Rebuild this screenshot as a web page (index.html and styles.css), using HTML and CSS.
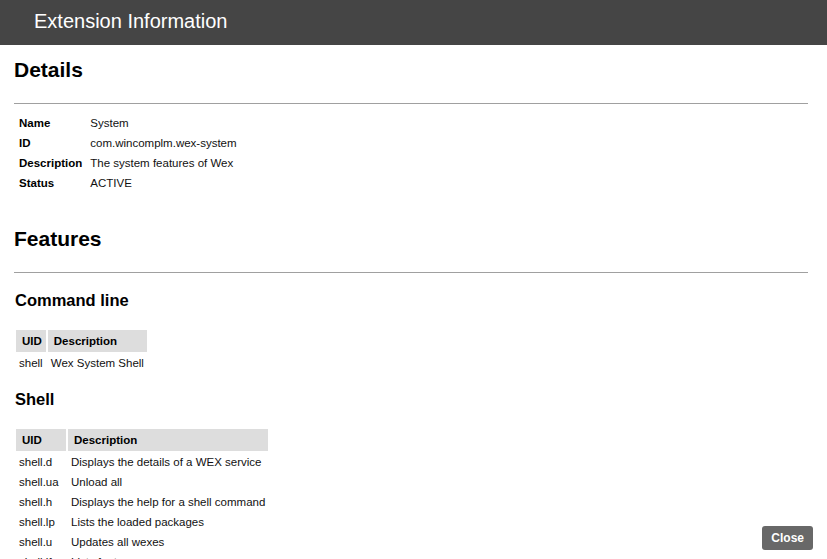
FILE: index.html
```html
<!DOCTYPE html>
<html>
<head>
<meta charset="utf-8">
<title>Extension Information</title>
<link rel="stylesheet" href="styles.css">
</head>
<body>
<header class="topbar">Extension Information</header>
<main class="content">
  <h2 class="section-title">Details</h2>
  <hr class="rule">
  <table class="details">
    <tr><td class="label">Name</td><td>System</td></tr>
    <tr><td class="label">ID</td><td>com.wincomplm.wex-system</td></tr>
    <tr><td class="label">Description</td><td>The system features of Wex</td></tr>
    <tr><td class="label">Status</td><td>ACTIVE</td></tr>
  </table>

  <h2 class="section-title features-title">Features</h2>
  <hr class="rule">
  <h3 class="group-title first-group">Command line</h3>
  <table class="grid">
    <tr><th>UID</th><th>Description</th></tr>
    <tr><td>shell</td><td>Wex System Shell</td></tr>
  </table>

  <h3 class="group-title">Shell</h3>
  <table class="grid">
    <tr><th class="uid-wide">UID</th><th>Description</th></tr>
    <tr><td>shell.d</td><td>Displays the details of a WEX service</td></tr>
    <tr><td>shell.ua</td><td>Unload all</td></tr>
    <tr><td>shell.h</td><td>Displays the help for a shell command</td></tr>
    <tr><td>shell.lp</td><td>Lists the loaded packages</td></tr>
    <tr><td>shell.u</td><td>Updates all wexes</td></tr>
    <tr><td>shell.lf</td><td>Lists features</td></tr>
  </table>
</main>
<button class="close-btn">Close</button>
</body>
</html>
```

FILE: styles.css
```css
html, body {
  margin: 0;
  padding: 0;
  height: 100%;
  overflow: hidden;
  background: #ffffff;
  font-family: "Liberation Sans", Arial, sans-serif;
  color: #111111;
}

.topbar {
  height: 45px;
  line-height: 43px;
  background: #454545;
  color: #ffffff;
  font-size: 20px;
  padding-left: 34px;
  box-sizing: border-box;
}

.content {
  padding: 0 19px 0 14px;
}

.section-title {
  margin: 13px 0 0 0;
  font-size: 21px;
  line-height: 24px;
  font-weight: bold;
  color: #000;
}

.features-title {
  margin-top: 33px;
}

.rule {
  height: 0;
  border: 0;
  border-top: 1px solid #a0a0a0;
  margin: 21px 0 0 0;
}

.details {
  margin-top: 8px;
  border-spacing: 2px;
  border-collapse: separate;
  font-size: 11.5px;
  line-height: 16px;
}

.details td {
  padding: 1px 3px;
  vertical-align: middle;
}

.details .label {
  font-weight: bold;
  color: #000;
}

.group-title {
  margin: 15px 0 0 1px;
  font-size: 16.5px;
  line-height: 20px;
  font-weight: bold;
  color: #000;
}

.first-group {
  margin-top: 17px;
}

.grid {
  margin-top: 18px;
  border-spacing: 2px;
  border-collapse: separate;
  font-size: 11.5px;
  line-height: 16px;
}

.grid th {
  background: #dddddd;
  font-weight: bold;
  text-align: left;
  padding: 3px 4px 3px 6px;
  color: #000;
}

.grid td {
  padding: 1px 3px;
}

.grid .uid-wide {
  width: 40px;
}

.close-btn {
  position: fixed;
  right: 14px;
  bottom: 9px;
  background: #686868;
  color: #ffffff;
  border: 0;
  border-radius: 3px;
  font-family: "Liberation Sans", Arial, sans-serif;
  font-size: 12px;
  font-weight: bold;
  line-height: 14px;
  padding: 5px 9px;
  margin: 0;
}
```
